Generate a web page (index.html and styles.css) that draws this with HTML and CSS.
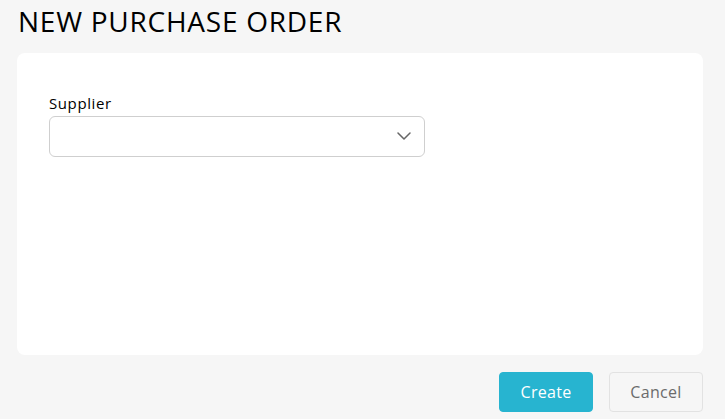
FILE: index.html
```html
<!DOCTYPE html>
<html>
<head>
<meta charset="utf-8" />
<title>New Purchase Order</title>
	<link rel="stylesheet" href="styles.css">
</head>

<body>
	<h1 class="page-title">NEW PURCHASE ORDER</h1>
	<form class="order-form">
		<div class="card">
			<label class="field-label" for="supplier">Supplier</label>
			<div class="select-box">
				<select id="supplier" class="select"></select>
				<svg class="chevron" width="14" height="8" viewBox="0 0 14 8">
					<path d="M1 1l6 6 6-6" fill="none" stroke="#666" stroke-width="1.5" stroke-linecap="round" stroke-linejoin="round"/>
				</svg>
			</div>
		</div>
		<div class="actions">
			<button type="button" class="btn btn-primary">Create</button>
			<button type="button" class="btn btn-secondary">Cancel</button>
		</div>
	</form>
</body>
</html>
```

FILE: styles.css
```css
body {
	margin: 0;
	padding: 0 22px 0 17px;
	background-color: #f6f6f6;
	font-family: "Open Sans", "Noto Sans", sans-serif;
	color: #000;
}
.page-title {
	margin: 0;
	padding: 2px 0 0 1px;
	height: 53px;
	box-sizing: border-box;
	font-size: 28px;
	font-weight: 400;
	letter-spacing: 0.75px;
	line-height: 38px;
}
.card {
	background: #fff;
	border-radius: 8px;
	height: 302px;
	box-sizing: border-box;
	padding: 38px 32px;
}
.field-label {
	display: block;
	font-size: 15px;
	font-weight: 500;
	letter-spacing: 0.6px;
	line-height: 24px;
	margin-bottom: 1px;
}
.select-box {
	position: relative;
	width: 376px;
}
.select {
	display: block;
	width: 100%;
	height: 41px;
	border: 1px solid #cfcfcf;
	border-radius: 6px;
	background: #fff;
	appearance: none;
	-webkit-appearance: none;
}
.chevron {
	position: absolute;
	right: 14px;
	top: 16px;
	pointer-events: none;
}
.actions {
	display: flex;
	justify-content: flex-end;
	gap: 16px;
	padding-top: 17px;
}
.btn {
	width: 94px;
	height: 40px;
	border-radius: 4px;
	font-family: inherit;
	font-size: 16px;
	letter-spacing: 0.3px;
	cursor: pointer;
}
.btn-primary {
	background: #27b4d0;
	border: 1px solid #27b4d0;
	color: #fff;
}
.btn-secondary {
	background: #f6f6f6;
	border: 1px solid #e2e2e2;
	color: #6b6b6b;
}
```
